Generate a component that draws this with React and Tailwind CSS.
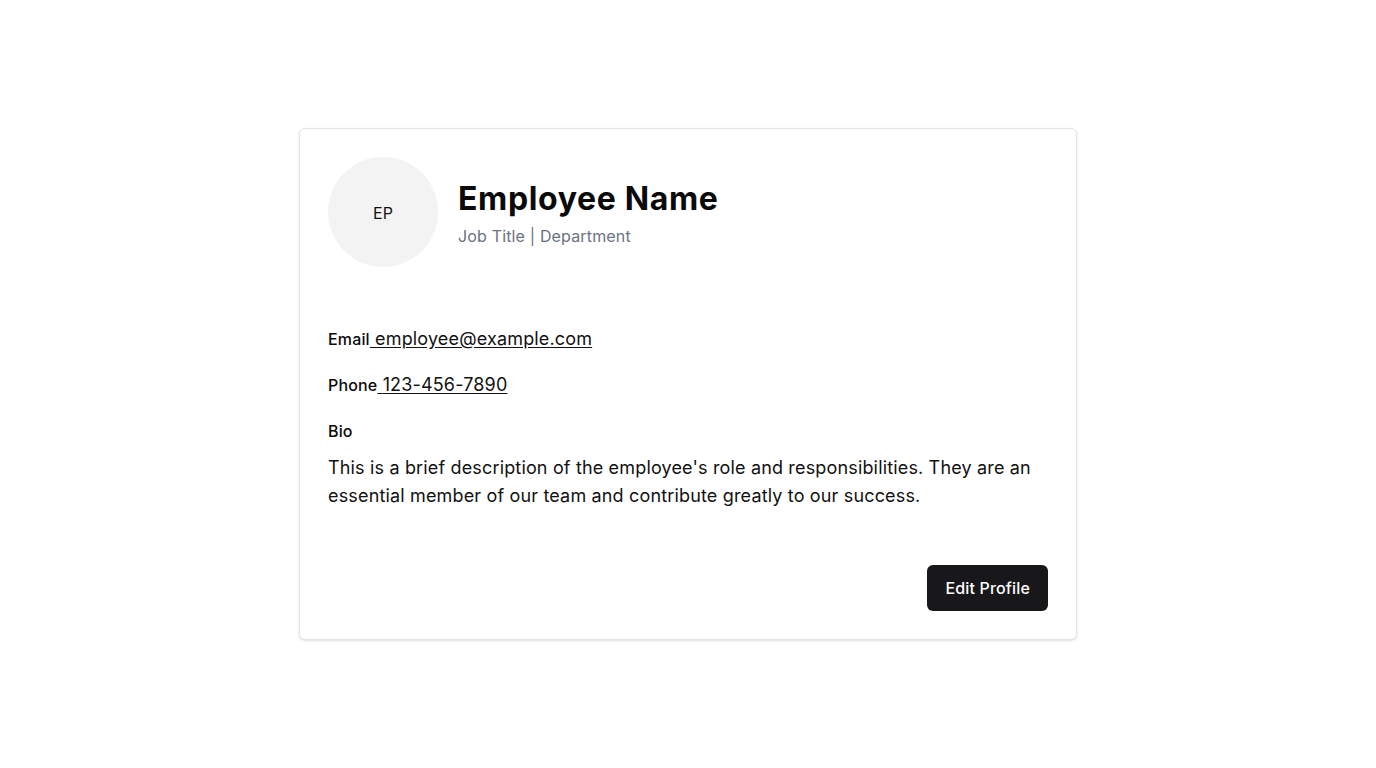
import React from "react";

export default function App() {
  return (
    <div
      className="min-h-screen bg-white flex items-center justify-center text-[#0a0a0a] tracking-[0.01em]"
      style={{ fontFamily: "Inter, 'Noto Sans', sans-serif" }}
    >
      <div className="w-[778px] bg-white border border-[#e4e4e7] rounded-md shadow-sm p-7">
        {/* Header */}
        <div className="flex items-center gap-5">
          <div className="w-[110px] h-[110px] rounded-full bg-[#f3f3f3] flex items-center justify-center text-base text-[#111]">
            <span className="mt-0.5">EP</span>
          </div>
          <div className="pt-0.5">
            <h1 className="text-[32px] leading-10 font-bold tracking-[0.02em] text-[#0a0a0a]">
              Employee Name
            </h1>
            <p className="text-base leading-6 text-[#6b7280] mt-[5px]">
              Job Title | Department
            </p>
          </div>
        </div>

        {/* Details */}
        <div className="mt-[58px] flex flex-col gap-[18px]">
          <div className="leading-7">
            <span className="text-base font-medium">Email</span>
            <a href="#" className="text-lg underline underline-offset-2 text-[#111]">
              {" "}employee@example.com
            </a>
          </div>
          <div className="leading-7">
            <span className="text-base font-medium">Phone</span>
            <a href="#" className="text-lg underline underline-offset-2 text-[#111]">
              {" "}123-456-7890
            </a>
          </div>
          <div>
            <div className="text-base leading-7 font-medium">Bio</div>
            <p className="mt-[9px] text-lg leading-7 text-[#111]">
              This is a brief description of the employee's role and
              responsibilities. They are an essential member of our team and
              contribute greatly to our success.
            </p>
          </div>
        </div>

        {/* Actions */}
        <div className="mt-[55px] flex justify-end">
          <button className="h-[46px] px-[18px] rounded-md bg-[#18181b] text-white text-base font-medium">
            Edit Profile
          </button>
        </div>
      </div>
    </div>
  );
}
